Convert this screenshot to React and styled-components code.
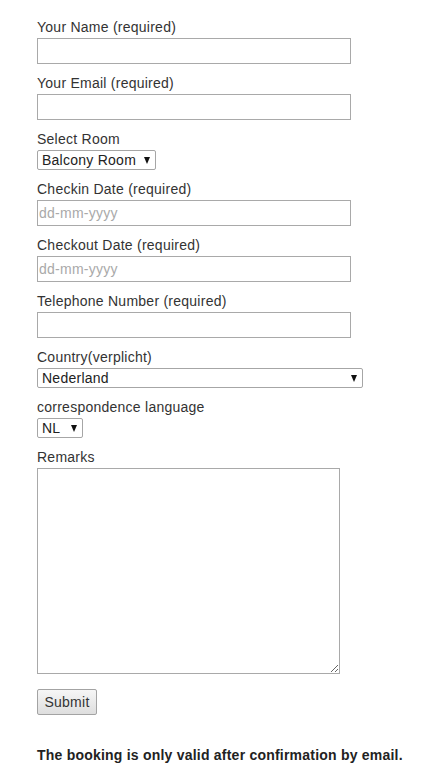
import React from "react";
import styled, { createGlobalStyle } from "styled-components";

const GlobalStyle = createGlobalStyle`
  body {
    margin: 0;
    background: #ffffff;
    font-family: "Liberation Sans", Arial, sans-serif;
    font-size: 14px;
    color: #333333;
  }
`;

const Form = styled.form`
  padding: 16px 0 0 37px;
`;

const Field = styled.div`
  display: flex;
  flex-direction: column;
  align-items: flex-start;
  margin-bottom: 8px;
`;

const Label = styled.label`
  display: block;
  line-height: 20px;
  padding-top: 1px;
  margin-bottom: 1px;
  letter-spacing: 0.25px;
  color: #333333;
`;

const TextInput = styled.input`
  box-sizing: border-box;
  width: 314px;
  height: 26px;
  margin: 0;
  padding: 0 1px;
  border: 1px solid #a9a9a9;
  border-radius: 0;
  font-family: "Liberation Sans", Arial, sans-serif;
  font-size: 14px;
  letter-spacing: 0.25px;
  color: #333333;
  background: #ffffff;
  outline: none;

  &::placeholder {
    color: #a9a9a9;
  }
`;

const SelectWrap = styled.div`
  position: relative;
  width: ${(props) => props.width}px;
`;

const Select = styled.select`
  appearance: none;
  -webkit-appearance: none;
  box-sizing: border-box;
  width: 100%;
  height: 20px;
  margin: 0;
  padding: 0 18px 0 4px;
  border: 1px solid #a6a6a6;
  border-radius: 2px;
  background: #ffffff;
  font-family: "Liberation Sans", Arial, sans-serif;
  font-size: 14px;
  letter-spacing: 0.25px;
  line-height: 18px;
  color: #222222;
  outline: none;
`;

const Arrow = styled.span`
  position: absolute;
  right: 6px;
  top: 7px;
  width: 0;
  height: 0;
  border-left: 3.5px solid transparent;
  border-right: 3.5px solid transparent;
  border-top: 7px solid #111111;
  pointer-events: none;
`;

const TextArea = styled.textarea`
  box-sizing: border-box;
  width: 303px;
  height: 206px;
  margin: 0;
  padding: 2px;
  border: 1px solid #a9a9a9;
  border-radius: 0;
  font-family: "Liberation Sans", Arial, sans-serif;
  font-size: 14px;
  outline: none;
  display: block;
`;

const Submit = styled.button`
  box-sizing: border-box;
  width: 60px;
  height: 26px;
  margin-top: 7px;
  padding: 0;
  border: 1px solid #a3a3a3;
  border-radius: 2px;
  background: linear-gradient(#f6f6f6, #dedede);
  font-family: "Liberation Sans", Arial, sans-serif;
  font-size: 14px;
  letter-spacing: 0.25px;
  color: #333333;
`;

const Notice = styled.p`
  margin: 32px 0 0;
  font-weight: bold;
  font-size: 14px;
  line-height: 17px;
  letter-spacing: 0.22px;
  color: #222222;
`;

const DropDown = ({ id, width, options }) => (
  <SelectWrap width={width}>
    <Select id={id} defaultValue={options[0]}>
      {options.map((o) => (
        <option key={o}>{o}</option>
      ))}
    </Select>
    <Arrow />
  </SelectWrap>
);

export default function App() {
  return (
    <>
      <GlobalStyle />
      <Form onSubmit={(e) => e.preventDefault()}>
        <Field>
          <Label htmlFor="name">Your Name (required)</Label>
          <TextInput id="name" type="text" />
        </Field>
        <Field>
          <Label htmlFor="email">Your Email (required)</Label>
          <TextInput id="email" type="text" />
        </Field>
        <Field>
          <Label htmlFor="room">Select Room</Label>
          <DropDown id="room" width={119} options={["Balcony Room", "Garden Room", "Suite"]} />
        </Field>
        <Field>
          <Label htmlFor="checkin">Checkin Date (required)</Label>
          <TextInput id="checkin" type="text" placeholder="dd-mm-yyyy" />
        </Field>
        <Field>
          <Label htmlFor="checkout">Checkout Date (required)</Label>
          <TextInput id="checkout" type="text" placeholder="dd-mm-yyyy" />
        </Field>
        <Field>
          <Label htmlFor="phone">Telephone Number (required)</Label>
          <TextInput id="phone" type="text" />
        </Field>
        <Field>
          <Label htmlFor="country">Country(verplicht)</Label>
          <DropDown id="country" width={326} options={["Nederland", "België", "Deutschland"]} />
        </Field>
        <Field>
          <Label htmlFor="lang">correspondence language</Label>
          <DropDown id="lang" width={46} options={["NL", "EN", "DE"]} />
        </Field>
        <Field>
          <Label htmlFor="remarks">Remarks</Label>
          <TextArea id="remarks" />
        </Field>
        <Submit type="submit">Submit</Submit>
        <Notice>The booking is only valid after confirmation by email.</Notice>
      </Form>
    </>
  );
}
